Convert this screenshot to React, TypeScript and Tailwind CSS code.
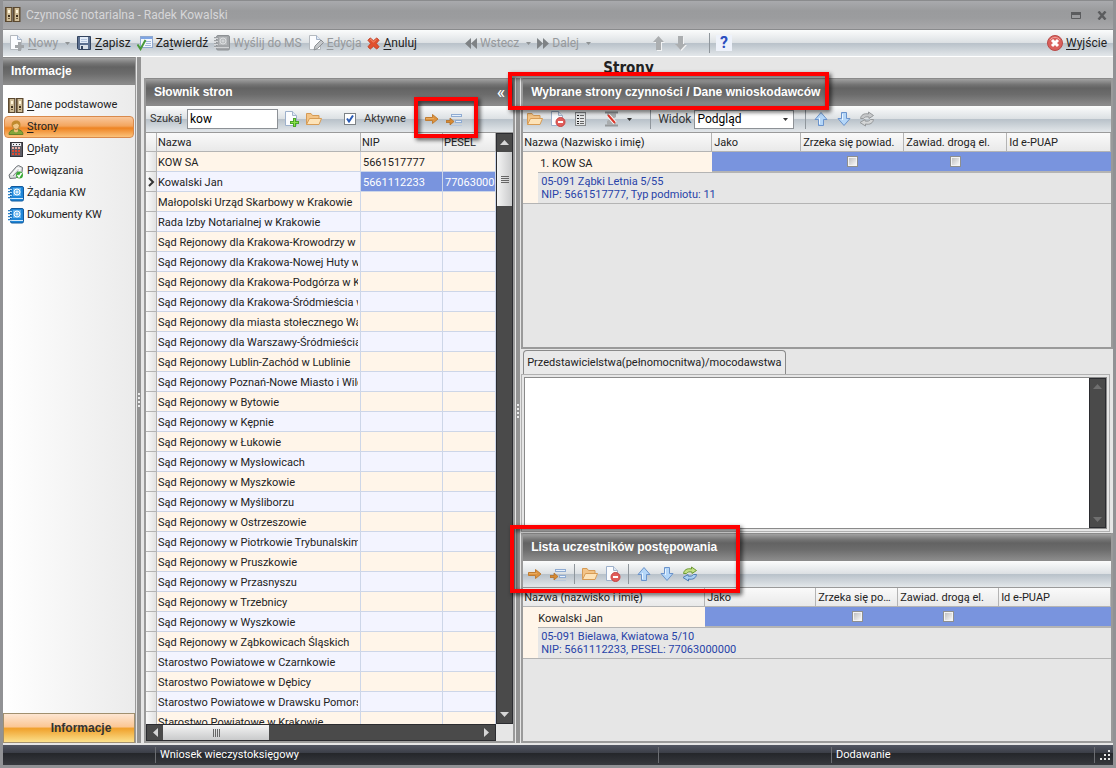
import type { ReactNode } from "react";
import clsx from "clsx";

const barBg =
  "bg-[linear-gradient(to_bottom,#fbfcfc_0%,#dde1e4_48%,#b9c2ca_52%,#e3e7ea_100%)]";
const capBg =
  "bg-[linear-gradient(to_bottom,#a2a2a2_0%,#737373_22%,#636363_35%,#6c6c6c_60%,#8b8b8b_100%)]";

/* ---------- icons ---------- */

function Svg({ children, w = 16, h = 16, box }: { children: ReactNode; w?: number; h?: number; box?: string }) {
  return (
    <svg width={w} height={h} viewBox={box ?? `0 0 ${w} ${h}`} className="shrink-0" fill="none" aria-hidden="true">
      {children}
    </svg>
  );
}

function BindersIcon() {
  return (
    <Svg>
      {[0, 8].map((x) => (
        <g key={x}>
          <rect x={x + 0.5} y="0.5" width="6.5" height="14" fill="#8a7453" stroke="#5a4830" />
          <rect x={x + 2} y="1" width="4" height="13" fill="#cfbd98" />
          <rect x={x + 3} y="3" width="2" height="3" fill="#fff6dc" />
          <rect x={x + 3} y="8" width="2" height="2" fill="#3e3020" />
          <rect x={x + 3} y="11" width="2" height="1" fill="#6d5a3a" />
        </g>
      ))}
    </Svg>
  );
}

function PersonIcon() {
  return (
    <Svg>
      <path d="M1 14.500c0-3.500 3-5 7-5s7 1.500 7 5z" fill="#84a53a" stroke="#62802a" />
      <path d="M6 9h4v2.500l-2 1-2-1z" fill="#eec07a" />
      <ellipse cx="8" cy="5.500" rx="3.500" ry="4" fill="#f0c888" stroke="#b47a2a" />
      <path d="M4 7C2.500 2 5.500.5 8.500.5S13.500 2.500 12 8c-.5-2-1-4-3-4.500C7 4 5 4.500 4 7z" fill="#c08a2e" />
    </Svg>
  );
}

function CalculatorIcon() {
  return (
    <Svg>
      <rect x="2.500" y=".5" width="12" height="14" fill="#5d5d66" stroke="#34343a" />
      <rect x="4" y="1" width="9" height="3" fill="#e9ecef" />
      <path d="M5 2.500h1M8 2.500h1M11 2.500h1" stroke="#333" />
      {[5, 8, 11].map((y) =>
        [4, 7, 10].map((x) => (
          <rect key={`${x}-${y}`} x={x} y={y} width="2" height="2" fill={y === 5 ? "#e9b0a6" : "#e04a32"} />
        ))
      )}
    </Svg>
  );
}

function LinkIcon() {
  return (
    <Svg>
      <path d="M1 11 8.500 2.500l2-1 4 2-.5 5L8 14l-6 .5z" fill="#d9dbdc" stroke="#6e7377" />
      <path d="m3.500 11 6-7 2.500.5-.5 3" stroke="#fafafa" strokeWidth="1.500" />
      <path d="m5 12 5-5" stroke="#8e9295" />
      <circle cx="11.500" cy="11" r="3.500" fill="#39a935" />
      <path d="m9.500 11 1.500 2 2.500-4" stroke="#fff" strokeWidth="1.500" />
    </Svg>
  );
}

function AddressBookIcon({ gray }: { gray?: boolean }) {
  const main = gray ? "#a3a6a9" : "#1f86d8";
  const dark = gray ? "#8d9194" : "#135a9c";
  return (
    <Svg>
      <rect x="2.500" y=".5" width="13" height="14.500" rx="1.500" fill={main} stroke={dark} />
      <path d="M4 12.500h11" stroke={gray ? "#d0d2d4" : "#d9ecfa"} />
      <rect x="5" y="2" width="8" height="8" fill={gray ? "#b6b9bb" : "#5fb0ec"} />
      <circle cx="9" cy="6" r="3" stroke={gray ? "#dcdee0" : "#fff"} />
      <circle cx="9" cy="6" r="1" stroke={gray ? "#dcdee0" : "#fff"} />
      <path d="M0 2.500h4M0 5.500h4M0 8.500h4M0 11.500h4" stroke={gray ? "#9da1a4" : "#2f7fc4"} />
      <path d="M0 3.500h4M0 6.500h4M0 9.500h4M0 12.500h4" stroke={gray ? "#d5d7d9" : "#b9def8"} />
    </Svg>
  );
}

function DocIcon({ badge }: { badge: "plus" | "grayplus" | "minus" | "pencil" }) {
  return (
    <Svg>
      <path d="M1.500.5h7l4 4v10h-11z" fill="#fbfcfe" stroke={badge === "plus" || badge === "minus" ? "#9db0cb" : "#b4b9be"} />
      <path d="M8.500.5v4h4" fill="#dfe8f4" stroke="#a3b3c9" />
      {badge === "plus" && (
        <>
          <path d="M10.500 7v9M6 11.500h9" stroke="#4aa528" strokeWidth="3" />
          <path d="M10.500 8v7M7 11.500h7" stroke="#8be04a" />
        </>
      )}
      {badge === "grayplus" && <path d="M10.500 7v9M6 11.500h9" stroke="#a2a5a8" strokeWidth="3" />}
      {badge === "minus" && (
        <>
          <circle cx="10.500" cy="11" r="4.500" fill="#e05c5a" stroke="#c84442" />
          <path d="M8 11h5" stroke="#fff" strokeWidth="2" />
        </>
      )}
      {badge === "pencil" && (
        <path d="m6 15 1-4 6-6 2.500 2.500-6 6z" fill="#c4c7ca" stroke="#8b8f93" />
      )}
    </Svg>
  );
}

function FolderIcon() {
  return (
    <Svg>
      <path d="M.5 13.500v-11h4.500l1.500 2h6.500v3" fill="#f3c487" stroke="#d59a55" />
      <path d="M.5 13.500 3.500 7.500h12l-2.500 6z" fill="#fde3b8" stroke="#d79c55" />
    </Svg>
  );
}

function SaveIcon() {
  return (
    <Svg>
      <path d="M1.500 1.500h13v13h-12l-1-1z" fill="#5b6f8f" stroke="#33445f" />
      <rect x="4" y="2" width="8" height="6" fill="#e3ecf8" />
      <path d="M5 4.500h6M5 6.500h6" stroke="#b3c4de" />
      <rect x="4" y="10" width="8" height="4" fill="#d8dfe8" />
      <rect x="5" y="11" width="2" height="3" fill="#33445f" />
    </Svg>
  );
}

function ConfirmIcon() {
  return (
    <Svg>
      <rect x="3.500" y="1.500" width="12" height="11" fill="#f3f7fd" stroke="#8fa8cf" />
      <path d="M4 3h11" stroke="#7ea5e4" strokeWidth="2" />
      <path d="M8 6.500h6M9 8.500h5M8 10.500h6" stroke="#9db4d8" />
      <path d="m.5 9.500 3 4.500 5-9" stroke="#4a9a3b" strokeWidth="2" />
    </Svg>
  );
}

function CancelIcon() {
  return (
    <Svg w={13} h={13} box="0 0 14 14">
      <path d="m1 3.500 2.500-2.500 3.500 3 3.500-3 2.500 2.500-3 3.500 3 3.500-2.500 2.500-3.500-3-3.500 3-2.500-2.500 3-3.500z" fill="#e2512f" stroke="#c03d20" />
      <path d="M3 3.500l1-1 3 3 3-3" stroke="#f69a7c" />
    </Svg>
  );
}

function SkipIcon({ back }: { back?: boolean }) {
  return (
    <Svg w={12} h={11} box="0 0 13 12">
      <path
        d={back ? "M6.500 0v12L0 6zM13 0v12L6.500 6z" : "M0 0v12l6.500-6zM6.500 0v12L13 6z"}
        fill="#7e8285"
      />
    </Svg>
  );
}

function BigArrow({ down, tone }: { down?: boolean; tone: "gray" | "blue" }) {
  if (tone === "gray") {
    return (
      <Svg>
        <path d={down ? "M6 2h5v8h3l-5.500 6L3 10h3z" : "M6 16h5V8h3L8.500 2 3 8h3z"} fill="#f2f3f4" />
        <path d={down ? "M5 1h5v8h3l-5.500 6L2 9h3z" : "M5 15h5V7h3L7.500 1 2 7h3z"} fill="#abaeb0" />
      </Svg>
    );
  }
  return (
    <Svg>
      <path
        d={down ? "M5.500 1.500h5v6h3.500L8 14.500 2 7.500h3.500z" : "M5.500 14.500h5v-6h3.500L8 1.500 2 8.500h3.500z"}
        fill="#b4d6f8"
        stroke="#6a93cc"
      />
      <path d={down ? "M6.500 3v6" : "M6.500 13V7"} stroke="#e9f4ff" />
    </Svg>
  );
}

function RefreshIcon({ gray }: { gray?: boolean }) {
  return (
    <Svg>
      <path d="M1.500 7.500C2 4 5 2 9.500 3V1l5 3.500-4.500 3V6C7 5.500 5.500 6 4.500 7.500z" fill={gray ? "#c6c8ca" : "#c3e084"} stroke={gray ? "#96999b" : "#6d9a34"} />
      <path d="M14.500 8.500C14 12 11 14 6.500 13v2L1 11.500l5-3V10c3 .5 4.500 0 5.500-1.500z" fill={gray ? "#d3d5d6" : "#a9cff2"} stroke={gray ? "#96999b" : "#4f7db5"} />
    </Svg>
  );
}

function OrangeArrow() {
  return (
    <Svg>
      <path d="M1.500 6.500h7v-3l5.500 4.500-5.500 4.500v-3h-7z" fill="#dd9440" stroke="#c07c32" />
      <path d="M2 7.500h8" stroke="#e9ab5e" />
    </Svg>
  );
}

function InsertIcon() {
  return (
    <Svg w={17} h={16}>
      <path d="M0 9.500h4V7l4 3.500L4 14v-2.500H0z" fill="#d88a32" stroke="#b0702b" strokeWidth=".8" />
      <rect x="5.500" y="3.500" width="10" height="2" fill="#e6f0fb" stroke="#8fabd2" />
      <rect x="9.500" y="9.500" width="6" height="2" fill="#e6f0fb" stroke="#8fabd2" />
      <path d="M4 14.500h12" stroke="#b9c9dd" />
    </Svg>
  );
}

function ListIcon() {
  return (
    <Svg>
      <rect x="2.500" y="1.500" width="10" height="13" fill="#e4e6e7" stroke="#85888a" />
      <path d="M4 4.500h2M4 7.500h2M4 10.500h2M4 12.500h2" stroke="#222" />
      <path d="M7 4.500h4M7 7.500h4M7 10.500h4M7 12.500h4" stroke="#666" />
    </Svg>
  );
}

function PinIcon() {
  return (
    <Svg>
      <path d="M1 1.500h13M1 14.500h13" stroke="#96999b" strokeWidth="2" />
      <path d="M3 2h9v4L9 8l3 2v4H3v-4l3-2-3-2z" fill="#a9acae" />
      <path d="m4 4 7 8" stroke="#fff" strokeWidth="4" />
      <path d="m4 4 7 8" stroke="#d9382b" strokeWidth="2" />
    </Svg>
  );
}

function HelpIcon() {
  return (
    <span className="grid h-4 w-4 place-items-center bg-[#eef2fa] text-[16px] leading-4 font-bold text-[#2c4fc0]">?</span>
  );
}

function ExitIcon() {
  return (
    <Svg>
      <circle cx="8" cy="8" r="7.500" fill="#d9605c" stroke="#b94a48" />
      <path d="M3 5a6 6 0 0 1 10 0" stroke="#f0a5a0" />
      <path d="m5 5 6 6M11 5l-6 6" stroke="#fff" strokeWidth="3" />
    </Svg>
  );
}

function Caret({ dark }: { dark?: boolean }) {
  return (
    <Svg w={5} h={3}>
      <path d="M0 0h5L2.500 3z" fill={dark ? "#333" : "#8f9395"} />
    </Svg>
  );
}

/* ---------- small parts ---------- */

function Mnemonic({ text }: { text: string }) {
  const at = text.indexOf("&");
  if (at < 0) return <span>{text}</span>;
  return (
    <span>
      {text.slice(0, at)}
      <u className="underline-offset-2">{text[at + 1]}</u>
      {text.slice(at + 2)}
    </span>
  );
}

type ToolProps = { icon: ReactNode; text?: string; off?: boolean; drop?: boolean; label?: string };

function Tool({ icon, text, off, drop, label }: ToolProps) {
  return (
    <button
      type="button"
      disabled={off}
      aria-label={label}
      className={clsx("flex shrink-0 items-center gap-[3px] text-[12px] whitespace-nowrap", off ? "text-[#96999c]" : "text-[#222]")}
    >
      {icon}
      {text && <Mnemonic text={text} />}
      {drop && <span className="pl-1"><Caret dark={!off} /></span>}
    </button>
  );
}

function Separator() {
  return <span className="h-5 w-px shrink-0 bg-[#8f969c]" />;
}

function Caption({ children, extra }: { children: ReactNode; extra?: ReactNode }) {
  return (
    <div className={clsx("flex h-7 shrink-0 items-center justify-between border-y border-[#8a8a8a] px-2 text-white", capBg)}>
      <h2 className="font-['Liberation_Sans',sans-serif] text-[12px] font-bold whitespace-nowrap">{children}</h2>
      {extra}
    </div>
  );
}

function Splitter() {
  return (
    <div className="flex w-1 shrink-0 flex-col items-center justify-center gap-[2px] bg-[#939393]">
      {[0, 1, 2, 3].map((i) => (
        <span key={i} className="h-[2px] w-[2px] bg-[#ececec]" />
      ))}
    </div>
  );
}

function Tick({ label }: { label: string }) {
  return (
    <input
      type="checkbox"
      aria-label={label}
      className="block h-[11px] w-[11px] appearance-none border border-[#8e8f8f] bg-linear-to-br from-[#b9b9b9] to-white shadow-[inset_0_0_0_1px_#f4f4f4]"
    />
  );
}

function Highlight({ className }: { className: string }) {
  return (
    <div
      className={clsx(
        "pointer-events-none absolute z-10 border-4 border-[#fe0000] drop-shadow-[2px_2px_2px_rgba(0,0,0,0.7)]",
        className
      )}
    />
  );
}

/* ---------- sidebar ---------- */

const sections = [
  { text: "&Dane podstawowe", icon: <BindersIcon /> },
  { text: "&Strony", icon: <PersonIcon />, active: true },
  { text: "&Opłaty", icon: <CalculatorIcon /> },
  { text: "Powiązania", icon: <LinkIcon /> },
  { text: "Żądania KW", icon: <AddressBookIcon /> },
  { text: "Dokumenty KW", icon: <AddressBookIcon /> },
];

function Sidebar() {
  return (
    <aside className="flex w-[133px] shrink-0 flex-col border-r border-[#9b9b9b] bg-linear-to-r from-white to-[#ebebeb]">
      <Caption>Informacje</Caption>
      <nav className="flex flex-1 flex-col px-px pt-[9px]">
        {sections.map((s) => (
          <a
            key={s.text}
            href="#"
            className={clsx(
              "flex h-[22px] items-center gap-[3px] rounded-sm border px-[3px] pt-px text-[11px] whitespace-nowrap text-[#222]",
              s.active
                ? "border-[#d98a4c] bg-[linear-gradient(to_bottom,#f9c79c_0%,#f3a55e_45%,#ee8322_55%,#fbc27a_100%)]"
                : "border-transparent"
            )}
          >
            {s.icon}
            <Mnemonic text={s.text} />
          </a>
        ))}
      </nav>
      <button
        type="button"
        className="h-[30px] border border-[#a1906f] bg-[linear-gradient(to_bottom,#fde6d2_0%,#fbc795_45%,#f0a12c_52%,#fbe08c_100%)] pl-6 font-['Liberation_Sans',sans-serif] text-[12px] font-bold text-[#333]"
      >
        Informacje
      </button>
    </aside>
  );
}

/* ---------- dictionary ---------- */

const people: [string, string?, string?][] = [
  ["KOW SA", "5661517777"],
  ["Kowalski Jan", "5661112233", "77063000000"],
  ["Małopolski Urząd Skarbowy w Krakowie"],
  ["Rada Izby Notarialnej w Krakowie"],
  ["Sąd Rejonowy dla Krakowa-Krowodrzy w Krakowie"],
  ["Sąd Rejonowy dla Krakowa-Nowej Huty w Krakowie"],
  ["Sąd Rejonowy dla Krakowa-Podgórza w Krakowie"],
  ["Sąd Rejonowy dla Krakowa-Śródmieścia w Krakowie"],
  ["Sąd Rejonowy dla miasta stołecznego Warszawy"],
  ["Sąd Rejonowy dla Warszawy-Śródmieścia"],
  ["Sąd Rejonowy Lublin-Zachód w Lublinie"],
  ["Sąd Rejonowy Poznań-Nowe Miasto i Wilda"],
  ["Sąd Rejonowy w Bytowie"],
  ["Sąd Rejonowy w Kępnie"],
  ["Sąd Rejonowy w Łukowie"],
  ["Sąd Rejonowy w Mysłowicach"],
  ["Sąd Rejonowy w Myszkowie"],
  ["Sąd Rejonowy w Myśliborzu"],
  ["Sąd Rejonowy w Ostrzeszowie"],
  ["Sąd Rejonowy w Piotrkowie Trybunalskim"],
  ["Sąd Rejonowy w Pruszkowie"],
  ["Sąd Rejonowy w Przasnyszu"],
  ["Sąd Rejonowy w Trzebnicy"],
  ["Sąd Rejonowy w Wyszkowie"],
  ["Sąd Rejonowy w Ząbkowicach Śląskich"],
  ["Starostwo Powiatowe w Czarnkowie"],
  ["Starostwo Powiatowe w Dębicy"],
  ["Starostwo Powiatowe w Drawsku Pomorskim"],
  ["Starostwo Powiatowe w Krakowie"],
];

const headCell =
  "h-[19px] overflow-hidden border-r border-b border-[#b4b4b4] bg-linear-to-b from-[#fafafa] to-[#e9e9e9] p-0 px-px pt-[2px] text-left leading-4 font-normal whitespace-nowrap";

function PeopleTable() {
  return (
    <table className="w-full table-fixed border-separate border-spacing-0 text-[11px] leading-[17px] text-[#222]">
      <colgroup>
        <col className="w-[11px]" />
        <col className="w-[204px]" />
        <col className="w-[82px]" />
        <col />
      </colgroup>
      <thead>
        <tr>
          <th className={headCell} aria-label="Wskaźnik" />
          <th className={headCell}>Nazwa</th>
          <th className={headCell}>NIP</th>
          <th className={headCell}>PESEL</th>
        </tr>
      </thead>
      <tbody>
        {people.map(([name, nip, pesel], i) => {
          const selected = name === "Kowalski Jan";
          const stripe = i % 2 ? "bg-[#f3f4ff]" : "bg-[#fff5e9]";
          const cell = "overflow-hidden border-r border-b border-[#cdd6e8] p-0 pt-[2px] whitespace-nowrap";
          const number = clsx(cell, "pl-[2px]", selected ? "bg-[#7994de] text-white" : stripe);
          return (
            <tr key={name}>
              <td className="h-5 border-r border-b border-[#b4b4b4] bg-linear-to-r from-[#fafafa] to-[#e2e2e2] p-0">
                {selected && (
                  <Svg w={9} h={10}>
                    <path d="m3 1 4 4-4 4" stroke="#333" strokeWidth="2" />
                  </Svg>
                )}
              </td>
              <td className={clsx(cell, "pr-[2px] pl-px", stripe)}>
                <div className="overflow-hidden">{name}</div>
              </td>
              <td className={number}>{nip}</td>
              <td className={number}>{pesel}</td>
            </tr>
          );
        })}
      </tbody>
    </table>
  );
}

function ScrollArrow({ dir, dim }: { dir: "up" | "down" | "left" | "right"; dim?: boolean }) {
  const shape = {
    up: "M0 7 4.500 2 9 7z",
    down: "M0 2h9L4.500 7z",
    left: "M7 0v9L2 4.500z",
    right: "M2 0v9l5-4.500z",
  }[dir];
  return (
    <Svg w={9} h={9}>
      <path d={shape} fill={dim ? "#6f6f6f" : "#d6d6d6"} />
    </Svg>
  );
}

function DictionaryPanel() {
  return (
    <section className="relative flex w-[38.3%] shrink-0 flex-col border-2 border-t-0 border-[#9a9a9a] bg-[#e6e6e6]">
      <Caption extra={<span className="text-[18px] leading-4">«</span>}>Słownik stron</Caption>
      <div className={clsx("flex h-[27px] shrink-0 items-center gap-1.5 border-b border-[#9a9a9a] pl-1", barBg)}>
        <label htmlFor="szukaj" className="w-[31px] text-[11px] whitespace-nowrap text-[#333]">Szukaj</label>
        <input
          id="szukaj"
          defaultValue="kow"
          className="h-5 w-[91px] border border-[#8d9196] bg-white px-[2px] text-[12px] text-black"
        />
        <Tool icon={<DocIcon badge="plus" />} label="Dodaj" />
        <Tool icon={<FolderIcon />} label="Otwórz" />
        <label className="ml-4 flex items-center gap-2 text-[11px] text-[#333]">
          <span className="grid place-items-center">
            <input
              type="checkbox"
              defaultChecked
              className="col-start-1 row-start-1 h-3 w-3 appearance-none border border-[#7d8286] bg-white"
            />
            <span className="pointer-events-none col-start-1 row-start-1">
              <Svg w={8} h={8}>
                <path d="m1 3.500 2 3 4-6" stroke="#2a5bb5" strokeWidth="2" />
              </Svg>
            </span>
          </span>
          Aktywne
        </label>
        <span className="w-1.5" />
        <Tool icon={<OrangeArrow />} label="Przenieś" />
        <Tool icon={<InsertIcon />} label="Wstaw" />
      </div>
      <div className="flex min-h-0 flex-1">
        <div className="flex min-w-0 flex-1 flex-col">
          <div className="min-h-0 flex-1 basis-0 overflow-hidden">
            <PeopleTable />
          </div>
          <div className="flex h-[17px] shrink-0 items-center justify-between border border-[#2b2c30] bg-[#4a4a4a] px-1">
            <ScrollArrow dir="left" />
            <span className="mr-auto ml-[3px] flex h-[15px] w-[106px] items-center justify-center gap-px bg-linear-to-b from-[#f4f4f4] to-[#c9cacb]">
              {[0, 1, 2, 3].map((i) => (
                <span key={i} className="h-2 w-px bg-[#666]" />
              ))}
            </span>
            <ScrollArrow dir="right" />
          </div>
        </div>
        <div className="flex w-[17px] shrink-0 flex-col pb-[17px]">
          <div className="flex flex-1 flex-col items-center justify-between border border-[#2b2c30] bg-[#4a4a4a] py-1">
            <ScrollArrow dir="up" />
            <span className="mt-[5px] mb-auto flex h-[54px] w-[15px] flex-col items-center justify-center gap-px bg-linear-to-r from-[#f4f4f4] to-[#c9cacb]">
              {[0, 1, 2, 3].map((i) => (
                <span key={i} className="h-px w-2 bg-[#666]" />
              ))}
            </span>
            <ScrollArrow dir="down" />
          </div>
        </div>
      </div>
      <Highlight className="top-[19px] left-[268px] h-[41px] w-[64px]" />
    </section>
  );
}

/* ---------- right side ---------- */

type PartyProps = {
  cols: ReactNode;
  heads: string[];
  name: string;
  lines: string[];
  indent: string;
};

function PartyTable({ cols, heads, name, lines, indent }: PartyProps) {
  const blue = "h-5 border-b border-[#b4b4b4] bg-[#7994de] p-0";
  return (
    <table className="w-full table-fixed border-separate border-spacing-0 text-[11px] text-[#222]">
      {cols}
      <thead>
        <tr>
          {heads.map((h, i) => (
            <th key={h} colSpan={i === 0 ? 2 : 1} className={clsx(headCell, "truncate", i > 0 && "pl-[2px]")}>
              {h}
            </th>
          ))}
        </tr>
      </thead>
      <tbody>
        <tr>
          <td colSpan={2} className={clsx("h-5 bg-[#fff5e9] p-0 pt-[2px] leading-[17px]", indent)}>{name}</td>
          <td className={blue} />
          <td className={blue}><span className="flex justify-center"><Tick label={heads[2]} /></span></td>
          <td className={blue}><span className="flex justify-center"><Tick label={heads[3]} /></span></td>
          <td className={blue} />
        </tr>
        <tr>
          <td className="border-b border-[#b4b4b4] bg-[#fff5e9] p-0" />
          <td colSpan={5} className="h-8 border-y border-[#b4b4b4] p-0 pl-[3px] leading-[13px] text-[#2843a8]">
            {lines.map((l) => (
              <div key={l}>{l}</div>
            ))}
          </td>
        </tr>
      </tbody>
    </table>
  );
}

function SelectedPanel() {
  return (
    <section className="relative flex min-h-0 flex-col border-2 border-t-0 border-[#9a9a9a] bg-[#e6e6e6]">
      <Caption>Wybrane strony czynności / Dane wnioskodawców</Caption>
      <div className={clsx("flex h-[27px] shrink-0 items-center gap-[7px] border-b border-[#9a9a9a] pl-1", barBg)}>
        <Tool icon={<FolderIcon />} label="Otwórz" />
        <Tool icon={<DocIcon badge="minus" />} label="Usuń" />
        <Tool icon={<ListIcon />} label="Lista" />
        <span className="w-px" />
        <Tool icon={<PinIcon />} label="Rola" drop />
        <span className="w-1" />
        <Separator />
        <label htmlFor="widok" className="text-[12px] text-[#333]">Widok</label>
        <span className="mr-1 -ml-1 grid w-[100px] items-center">
          <select
            id="widok"
            className="col-start-1 row-start-1 h-[19px] appearance-none border border-[#8d9196] bg-white px-[2px] text-[12px] leading-4 text-black"
          >
            <option>Podgląd</option>
          </select>
          <span className="pointer-events-none col-start-1 row-start-1 justify-self-end pr-[6px]">
            <Caret dark />
          </span>
        </span>
        <Separator />
        <Tool icon={<BigArrow tone="blue" />} label="W górę" />
        <Tool icon={<BigArrow tone="blue" down />} label="W dół" />
        <Tool icon={<RefreshIcon gray />} label="Odśwież" off />
      </div>
      <PartyTable
        cols={
          <colgroup>
            <col className="w-[15px]" />
            <col className="w-[174px]" />
            <col className="w-[89px]" />
            <col className="w-[103px]" />
            <col className="w-[103px]" />
            <col />
          </colgroup>
        }
        heads={["Nazwa (Nazwisko i imię)", "Jako", "Zrzeka się powiad.", "Zawiad. drogą el.", "Id e-PUAP"]}
        name="1. KOW SA"
        indent="pl-[17px]"
        lines={["05-091 Ząbki Letnia 5/55", "NIP: 5661517777, Typ podmiotu: 11"]}
      />
      <Highlight className="-top-[6px] -left-[15px] h-[38px] w-[321px]" />
    </section>
  );
}

function ProxiesPanel() {
  return (
    <section className="mr-[3px] flex min-h-0 flex-col">
      <div role="tablist" className="flex shrink-0">
        <button
          type="button"
          role="tab"
          aria-selected="true"
          className="ml-[2px] h-6 rounded-t border border-b-0 border-[#8a8a8a] bg-[#e9e9e9] px-[3px] pt-px text-[11px] whitespace-nowrap text-[#222]"
        >
          Przedstawicielstwa(pełnomocnitwa)/mocodawstwa
        </button>
      </div>
      <div className="flex min-h-0 flex-1 border border-[#b0b0b0] p-[2px]">
        <div className="flex flex-1 justify-end border border-[#8a8a8a] bg-white">
          <div className="flex w-[17px] flex-col items-center justify-between border border-[#2b2c30] bg-[#4a4a4a] py-[3px]">
            <ScrollArrow dir="up" dim />
            <ScrollArrow dir="down" dim />
          </div>
        </div>
      </div>
    </section>
  );
}

function ParticipantsPanel() {
  return (
    <section className="relative flex min-h-0 flex-col border-2 border-t-0 border-[#9a9a9a] bg-[#e6e6e6]">
      <Caption>Lista uczestników postępowania</Caption>
      <div className={clsx("flex h-[27px] shrink-0 items-center gap-[7px] border-b border-[#9a9a9a] pl-1", barBg)}>
        <Tool icon={<OrangeArrow />} label="Przenieś" />
        <Tool icon={<InsertIcon />} label="Wstaw" />
        <Separator />
        <Tool icon={<FolderIcon />} label="Otwórz" />
        <Tool icon={<DocIcon badge="minus" />} label="Usuń" />
        <Separator />
        <Tool icon={<BigArrow tone="blue" />} label="W górę" />
        <Tool icon={<BigArrow tone="blue" down />} label="W dół" />
        <Tool icon={<RefreshIcon />} label="Odśwież" />
      </div>
      <PartyTable
        cols={
          <colgroup>
            <col className="w-[15px]" />
            <col className="w-[167px]" />
            <col className="w-[111px]" />
            <col className="w-[82px]" />
            <col className="w-[101px]" />
            <col />
          </colgroup>
        }
        heads={["Nazwa (nazwisko i imię)", "Jako", "Zrzeka się powiad.", "Zawiad. drogą el.", "Id e-PUAP"]}
        name="Kowalski Jan"
        indent="pl-[15px]"
        lines={["05-091 Bielawa, Kwiatowa 5/10", "NIP: 5661112233, PESEL: 77063000000"]}
      />
      <Highlight className="-top-[8px] -left-[13px] h-[68px] w-[230px]" />
    </section>
  );
}

/* ---------- window ---------- */

function TitleBar() {
  return (
    <header className="flex h-[30px] shrink-0 items-center border-t border-b border-[#8a8b8d] bg-[linear-gradient(to_bottom,#a9aaad_0%,#9a9b9d_35%,#9b9c9e_60%,#a9a9ab_100%)] pr-[6px] pl-[2px]">
      <BindersIcon />
      <h1 className="ml-[5px] text-[12px] text-[#d6d6d8]">Czynność notarialna - Radek Kowalski</h1>
      <button type="button" aria-label="Maksymalizuj" className="ml-auto">
        <Svg w={10} h={7}>
          <path d="M.5 0v6.500h9V0" stroke="#5b5c5e" />
          <path d="M0 1.500h10" stroke="#5b5c5e" strokeWidth="3" />
        </Svg>
      </button>
      <button type="button" aria-label="Zamknij" className="ml-4">
        <Svg w={10} h={9}>
          <path d="m1.500.5 7 8M8.500.5l-7 8" stroke="#5b5c5e" strokeWidth="2.500" />
        </Svg>
      </button>
    </header>
  );
}

function MainToolbar() {
  return (
    <div className={clsx("flex h-[27px] shrink-0 items-center gap-1.5 border-b border-white px-[6px]", barBg)}>
      <Tool icon={<DocIcon badge="grayplus" />} text="&Nowy" off drop />
      <Tool icon={<SaveIcon />} text="&Zapisz" />
      <Tool icon={<ConfirmIcon />} text="Za&twierdź" />
      <Tool icon={<AddressBookIcon gray />} text="Wyślij do MS" off />
      <Tool icon={<DocIcon badge="pencil" />} text="&Edycja" off />
      <Tool icon={<CancelIcon />} text="&Anuluj" />
      <span className="w-9" />
      <Tool icon={<SkipIcon back />} text="Wstecz" off drop />
      <Tool icon={<SkipIcon />} text="Dalej" off drop />
      <span className="w-12" />
      <Tool icon={<BigArrow tone="gray" />} label="Poprzedni" off />
      <Tool icon={<BigArrow tone="gray" down />} label="Następny" off />
      <span className="w-2" />
      <Separator />
      <Tool icon={<HelpIcon />} label="Pomoc" />
      <span className="flex-1" />
      <Tool icon={<ExitIcon />} text="&Wyjście" />
    </div>
  );
}

function StatusBar() {
  return (
    <footer className="flex h-5 shrink-0 items-center bg-[linear-gradient(to_bottom,#525662_0%,#3b3e47_40%,#25272b_42%,#37393e_100%)] text-[11px] text-white">
      <span className="w-[152px]" />
      <span className="h-4 w-px bg-[#6b6d72]" />
      <span className="flex-1 pt-px pl-1">Wniosek wieczystoksięgowy</span>
      <span className="h-4 w-px bg-[#6b6d72]" />
      <span className="w-[172px]" />
      <span className="h-4 w-px bg-[#6b6d72]" />
      <span className="w-[262px] pt-px pl-1">Dodawanie</span>
      <span className="h-4 w-px bg-[#6b6d72]" />
      <span className="pr-[2px] pl-[5px]">
        <Svg w={11} h={11}>
          {[[8, 0], [8, 4], [4, 4], [8, 8], [4, 8], [0, 8]].map(([x, y]) => (
            <rect key={`${x}-${y}`} x={x} y={y} width="2" height="2" fill="#e8e8e8" />
          ))}
        </Svg>
      </span>
    </footer>
  );
}

export default function App() {
  return (
    <div className="flex h-screen flex-col border-x-[3px] border-b-[3px] border-[#919295] bg-[#e6e6e6] font-[Roboto,sans-serif]">
      <TitleBar />
      <MainToolbar />
      <main className="flex min-h-0 flex-1 gap-px pb-[2px]">
        <Sidebar />
        <Splitter />
        <div className="flex min-w-0 flex-1 flex-col pl-[2px]">
          <h2 className="h-[21px] shrink-0 text-center font-['DejaVu_Sans_Condensed','DejaVu_Sans',sans-serif] text-[15px] leading-[22px] font-bold text-[#222]">
            Strony
          </h2>
          <div className="flex min-h-0 flex-1 gap-px">
            <DictionaryPanel />
            <Splitter />
            <div className="grid min-w-0 flex-1 grid-rows-[271fr_182fr_210fr] gap-y-px">
              <SelectedPanel />
              <ProxiesPanel />
              <ParticipantsPanel />
            </div>
          </div>
        </div>
      </main>
      <StatusBar />
    </div>
  );
}
